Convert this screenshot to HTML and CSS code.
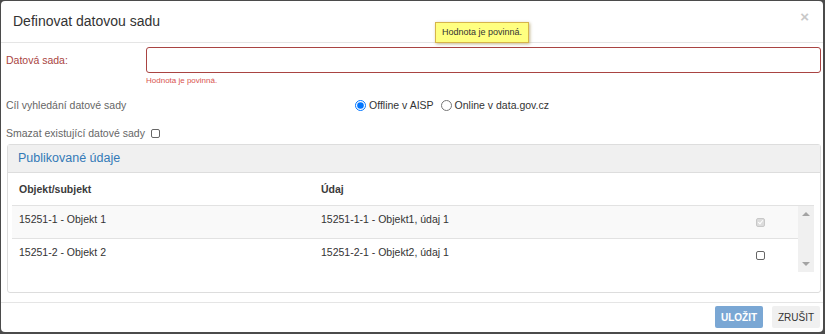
FILE: index.html
```html
<!DOCTYPE html>
<html lang="cs">

<head>
  <meta charset="UTF-8" />
  <title>Definovat datovou sadu</title>
  <link rel="stylesheet" href="styles.css">
</head>

<body>
  <div class="modal">
    <!-- HEADER -->
    <div class="modal-header">
      <span class="modal-title">Definovat datovou sadu</span>
      <span class="close">&times;</span>
      <div class="tooltip">Hodnota je povinná.</div>
    </div>

    <!-- BODY -->
    <div class="modal-body">
      <div class="form-row has-error">
        <label class="row-label">Datová sada:</label>
        <div class="field">
          <input type="text" class="text-input" />
          <div class="help-text">Hodnota je povinná.</div>
        </div>
      </div>

      <div class="form-row plain">
        <span class="row-label">Cíl vyhledání datové sady</span>
        <div class="radios">
          <label class="radio"><input type="radio" name="target" checked /> Offline v AISP</label>
          <label class="radio"><input type="radio" name="target" /> Online v data.gov.cz</label>
        </div>
      </div>

      <div class="form-row plain">
        <span class="inline-label">Smazat existující datové sady</span>
        <span class="box"></span>
      </div>

      <div class="panel">
        <div class="panel-heading">Publikované údaje</div>
        <div class="panel-body">
          <div class="grid-head">
            <span class="col-obj">Objekt/subjekt</span>
            <span class="col-val">Údaj</span>
          </div>
          <div class="grid-scroll">
            <div class="grid-rows">
              <div class="grid-row odd">
                <span class="col-obj">15251-1 - Objekt 1</span>
                <span class="col-val">15251-1-1 - Objekt1, údaj 1</span>
                <span class="col-chk"><span class="box checked"></span></span>
              </div>
              <div class="grid-row">
                <span class="col-obj">15251-2 - Objekt 2</span>
                <span class="col-val">15251-2-1 - Objekt2, údaj 1</span>
                <span class="col-chk"><span class="box"></span></span>
              </div>
            </div>
            <div class="scrollbar">
              <span class="arrow up"></span>
              <span class="arrow down"></span>
            </div>
          </div>
        </div>
      </div>
    </div>

    <!-- FOOTER -->
    <div class="modal-footer">
      <button class="btn btn-primary" disabled>ULOŽIT</button>
      <button class="btn btn-default">ZRUŠIT</button>
    </div>
  </div>
</body>

</html>
```

FILE: styles.css
```css
html,
body {
  margin: 0;
  height: 100%;
}

body {
  background-color: #4b4b4b;
  font-family: "Liberation Sans", Arial, sans-serif;
  color: #333;
  padding: 1px 2px 2px 1px;
  box-sizing: border-box;
}

.modal {
  background-color: white;
  border-radius: 4px;
  height: 100%;
  display: flex;
  flex-direction: column;
  overflow: hidden;
}

.modal-header {
  position: relative;
  flex-shrink: 0;
  height: 41px;
  border-bottom: 1px solid #e5e5e5;
  display: flex;
  align-items: center;
  padding: 0 12px 0 12px;
}

.modal-title {
  font-size: 14px;
  color: #333;
  flex: 1;
  padding-bottom: 2px;
}

.close {
  color: #c8c8c8;
  font-size: 15px;
  font-weight: bold;
  margin-right: 2px;
  padding-bottom: 10px;
}

.tooltip {
  position: absolute;
  left: 434px;
  top: 21px;
  background-color: #ffff80;
  border: 1px solid #d6b44a;
  box-shadow: 1px 1px 3px rgba(120, 90, 0, 0.45);
  font-size: 9px;
  line-height: 11px;
  padding: 4px 6px;
  color: #333;
}

.modal-body {
  flex: 1;
  min-height: 0;
  padding: 4px 2px 0 5px;
}

.form-row {
  display: flex;
  align-items: center;
  font-size: 10.5px;
  line-height: 12px;
}

.has-error {
  align-items: flex-start;
}

.row-label {
  width: 140px;
  flex-shrink: 0;
}

.has-error .row-label {
  color: #a94442;
  padding-top: 7px;
}

.field {
  flex: 1;
}

.text-input {
  display: block;
  box-sizing: border-box;
  width: 100%;
  height: 26px;
  border: 1px solid #a94442;
  border-radius: 3px;
  outline: none;
  margin: 0;
}

.help-text {
  color: #d9534f;
  font-size: 8px;
  line-height: 10px;
  margin-top: 3px;
}

.plain {
  color: #666;
  margin-top: 13px;
}

.plain + .plain {
  margin-top: 16px;
}

.radios {
  margin-left: 209px;
  display: flex;
  gap: 7px;
  color: #333;
}

.radio {
  display: flex;
  align-items: center;
  gap: 3px;
}

.radio input {
  margin: 0;
  width: 11px;
  height: 11px;
}

.box {
  display: inline-block;
  width: 7px;
  height: 7px;
  border: 1px solid #666;
  border-radius: 2px;
  background-color: white;
}

.inline-label + .box {
  margin-left: 6px;
}

.box.checked {
  border-color: #c8c8c8;
  background-color: #dcdcdc;
  position: relative;
}

.box.checked::after {
  content: "";
  position: absolute;
  left: 2px;
  top: 0;
  width: 2px;
  height: 4px;
  border: solid white;
  border-width: 0 1.5px 1.5px 0;
  transform: rotate(40deg);
}

.panel {
  margin-top: 5px;
  margin-left: 1px;
  border: 1px solid #ddd;
  border-radius: 3px;
  height: 149px;
  box-sizing: border-box;
}

.panel-heading {
  background-color: #f0f0f0;
  border-bottom: 1px solid #ddd;
  height: 27px;
  line-height: 27px;
  padding-left: 10px;
  color: #337ab7;
  font-size: 12.5px;
}

.panel-body {
  padding: 0 6px 0 4px;
  font-size: 10.5px;
}

.grid-head {
  display: flex;
  height: 32px;
  align-items: center;
  border-bottom: 1px solid #e2e2e2;
  font-weight: bold;
  color: #3a3a3a;
}

.col-obj {
  width: 302px;
  padding-left: 7px;
}

.col-val {
  flex: 1;
}

.col-chk {
  width: 42px;
}

.grid-scroll {
  display: flex;
}

.grid-rows {
  flex: 1;
}

.grid-row {
  display: flex;
  height: 33px;
  border-bottom: 1px solid #e2e2e2;
  padding-top: 7px;
  box-sizing: border-box;
}

.grid-row:last-child {
  border-bottom: none;
}

.grid-row.odd {
  background-color: #f9f9f9;
}

.grid-row .col-chk {
  padding-top: 4px;
}

.scrollbar {
  width: 16px;
  height: 66px;
  background-color: #f0f0f0;
  display: flex;
  flex-direction: column;
  justify-content: space-between;
  align-items: center;
  padding: 6px 0;
  box-sizing: border-box;
}

.arrow {
  width: 0;
  height: 0;
  border-left: 4px solid transparent;
  border-right: 4px solid transparent;
}

.arrow.up {
  border-bottom: 4px solid #a3a3a3;
}

.arrow.down {
  border-top: 4px solid #a3a3a3;
}

.modal-footer {
  flex-shrink: 0;
  border-top: 1px solid #e5e5e5;
  height: 30px;
  display: flex;
  justify-content: flex-end;
  align-items: flex-start;
  padding-top: 3px;
  box-sizing: border-box;
  gap: 9px;
  padding-right: 3px;
}

.btn {
  height: 22px;
  width: 48px;
  border: none;
  border-radius: 2px;
  font-family: "Liberation Sans", Arial, sans-serif;
  font-size: 10px;
  padding: 0;
}

.btn-primary {
  background-color: #7aa7d4;
  color: white;
  font-weight: bold;
}

.btn-default {
  background-color: #f0f0f0;
  color: #333;
}
```
